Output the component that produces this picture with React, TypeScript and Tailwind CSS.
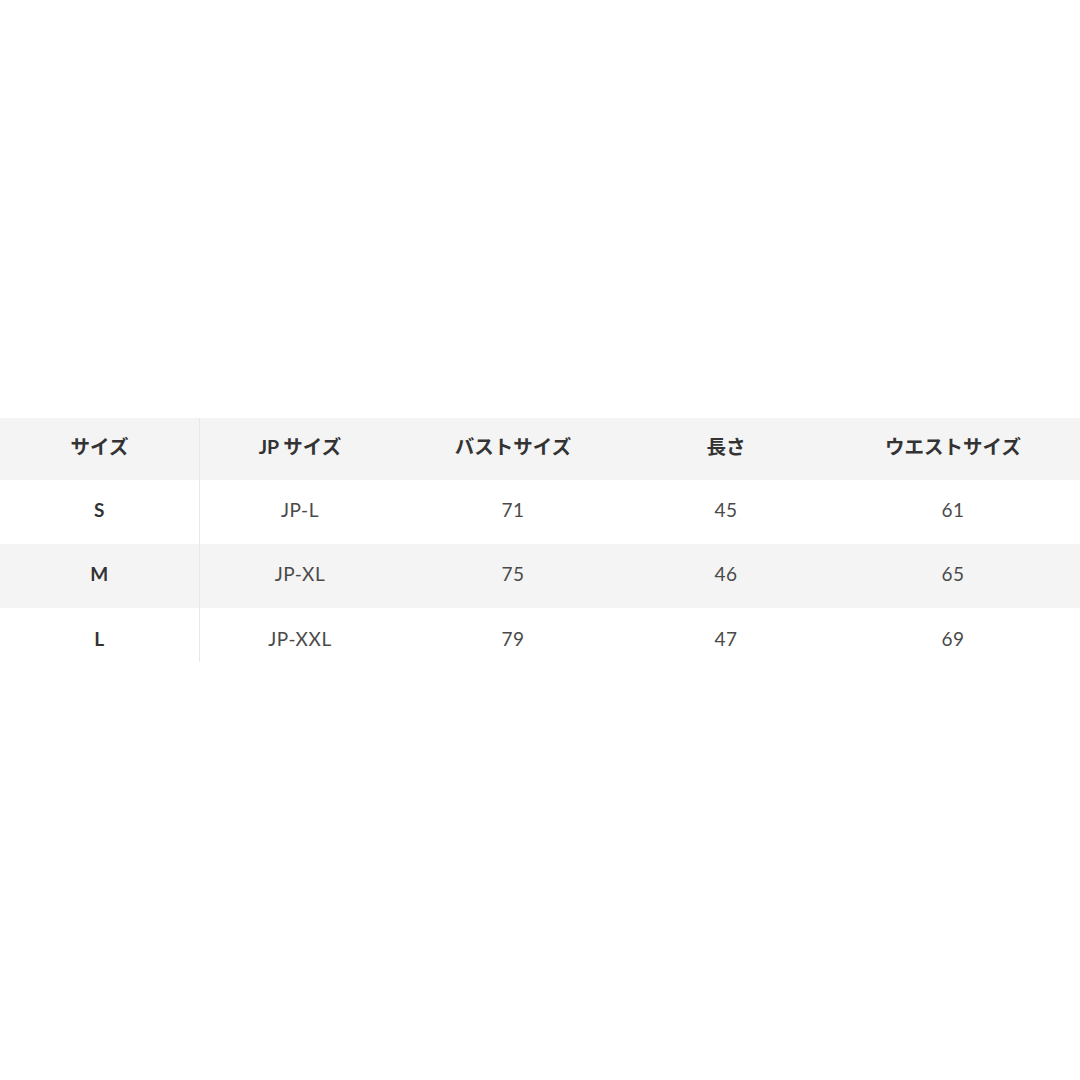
import React from "react";

const headers = ["サイズ", "JP サイズ", "バストサイズ", "長さ", "ウエストサイズ"];

const rows = [
  ["S", "JP-L", "71", "45", "61"],
  ["M", "JP-XL", "75", "46", "65"],
  ["L", "JP-XXL", "79", "47", "69"],
];

// column widths measured off the layout
const cols = "grid grid-cols-[200px_200px_226px_200px_254px]";
const font = "font-['Lato','Noto_Sans_CJK_JP',sans-serif]";

export default function App() {
  return (
    <div className={`h-[1080px] w-[1080px] bg-white flex items-center ${font}`}>
      <div className="w-full">
        {/* Header */}
        <div className={`${cols} h-[62px] bg-[#f4f4f4] text-[19.5px] font-bold text-[#333]`}>
          {headers.map((h, i) => (
            <div
              key={h}
              className={`flex items-center justify-center pb-[5px] ${i === 0 ? "border-r border-[#e8e8e8]" : ""}`}
            >
              {h}
            </div>
          ))}
        </div>

        {/* Body */}
        {rows.map((row, r) => {
          const last = r === rows.length - 1;
          return (
            <div
              key={row[0]}
              className={`${cols} text-[19px] tracking-[0.03em] text-[#4a4a4a] ${r % 2 === 1 ? "bg-[#f4f4f4]" : "bg-white"} ${last ? "h-[54px]" : "h-[64px]"}`}
            >
              {row.map((cell, i) => (
                <div
                  key={i}
                  className={`flex justify-center ${last ? "items-start pt-[17px]" : "items-center pb-[3px]"} ${i === 0 ? "font-bold text-[#333] border-r border-[#e8e8e8]" : ""}`}
                >
                  {cell}
                </div>
              ))}
            </div>
          );
        })}
      </div>
    </div>
  );
}
